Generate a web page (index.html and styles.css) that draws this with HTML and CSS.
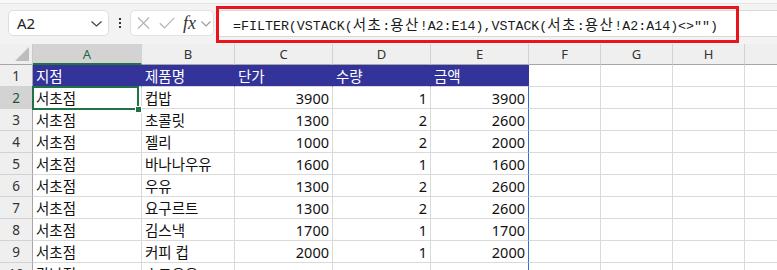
FILE: index.html
```html
<!DOCTYPE html>
<html lang="ko">
<head>
  <meta charset="utf-8">
  <title>FILTER VSTACK</title>
  <link rel="stylesheet" href="styles.css">
</head>
<body>
  <div class="ribbon-edge"></div>
  <div class="formula-bar">
    <div class="name-box">
      <span>A2</span>
      <svg width="11" height="6" viewBox="0 0 11 6"><path d="M0.5 0.5 L5.5 5 L10.5 0.5" fill="none" stroke="#444" stroke-width="1.2"/></svg>
    </div>
    <div class="grip"><i></i><i></i><i></i></div>
    <div class="fx-box">
      <svg width="13" height="12" viewBox="0 0 13 12"><path d="M1 0.5 L12 11.5 M12 0.5 L1 11.5" stroke="#b4b4b4" stroke-width="1.2" fill="none"/></svg>
      <svg width="16" height="12" viewBox="0 0 16 12"><path d="M0.8 6.2 L5.5 10.8 L15.2 0.8" stroke="#b4b4b4" stroke-width="1.2" fill="none"/></svg>
      <span class="fx">fx</span>
      <svg width="10" height="6" viewBox="0 0 10 6"><path d="M0.5 0.5 L5 5 L9.5 0.5" fill="none" stroke="#9a9a9a" stroke-width="1.1"/></svg>
    </div>
    <div class="formula-input">
      <span class="formula">=FILTER(VSTACK(<span class="ko">서초</span>:<span class="ko">용산</span>!A2:E14),VSTACK(<span class="ko">서초</span>:<span class="ko">용산</span>!A2:A14)&lt;&gt;"")</span>
    </div>
    <div class="highlight"></div>
  </div>

  <div class="sheet">
    <!-- column headers -->
    <div class="corner"><div class="corner-tri"></div></div>
    <div class="col-head active">A</div>
    <div class="col-head">B</div>
    <div class="col-head">C</div>
    <div class="col-head">D</div>
    <div class="col-head">E</div>
    <div class="col-head">F</div>
    <div class="col-head">G</div>
    <div class="col-head">H</div>
    <div class="col-head"></div>

    <!-- row 1 -->
    <div class="row-head">1</div>
    <div class="cell th">지점</div>
    <div class="cell th">제품명</div>
    <div class="cell th">단가</div>
    <div class="cell th">수량</div>
    <div class="cell th last">금액</div>
    <div class="cell"></div><div class="cell"></div><div class="cell"></div><div class="cell"></div>

    <!-- row 2 -->
    <div class="row-head active">2</div>
    <div class="cell selected">서초점<div class="selection"><div class="handle"></div></div></div>
    <div class="cell">컵밥</div>
    <div class="cell num">3900</div>
    <div class="cell num">1</div>
    <div class="cell num edge">3900</div>
    <div class="cell"></div><div class="cell"></div><div class="cell"></div><div class="cell"></div>

    <div class="row-head">3</div>
    <div class="cell">서초점</div>
    <div class="cell">초콜릿</div>
    <div class="cell num">1300</div>
    <div class="cell num">2</div>
    <div class="cell num edge">2600</div>
    <div class="cell"></div><div class="cell"></div><div class="cell"></div><div class="cell"></div>

    <div class="row-head">4</div>
    <div class="cell">서초점</div>
    <div class="cell">젤리</div>
    <div class="cell num">1000</div>
    <div class="cell num">2</div>
    <div class="cell num edge">2000</div>
    <div class="cell"></div><div class="cell"></div><div class="cell"></div><div class="cell"></div>

    <div class="row-head">5</div>
    <div class="cell">서초점</div>
    <div class="cell">바나나우유</div>
    <div class="cell num">1600</div>
    <div class="cell num">1</div>
    <div class="cell num edge">1600</div>
    <div class="cell"></div><div class="cell"></div><div class="cell"></div><div class="cell"></div>

    <div class="row-head">6</div>
    <div class="cell">서초점</div>
    <div class="cell">우유</div>
    <div class="cell num">1300</div>
    <div class="cell num">2</div>
    <div class="cell num edge">2600</div>
    <div class="cell"></div><div class="cell"></div><div class="cell"></div><div class="cell"></div>

    <div class="row-head">7</div>
    <div class="cell">서초점</div>
    <div class="cell">요구르트</div>
    <div class="cell num">1300</div>
    <div class="cell num">2</div>
    <div class="cell num edge">2600</div>
    <div class="cell"></div><div class="cell"></div><div class="cell"></div><div class="cell"></div>

    <div class="row-head">8</div>
    <div class="cell">서초점</div>
    <div class="cell">김스낵</div>
    <div class="cell num">1700</div>
    <div class="cell num">1</div>
    <div class="cell num edge">1700</div>
    <div class="cell"></div><div class="cell"></div><div class="cell"></div><div class="cell"></div>

    <div class="row-head">9</div>
    <div class="cell">서초점</div>
    <div class="cell">커피 컵</div>
    <div class="cell num">2000</div>
    <div class="cell num">1</div>
    <div class="cell num edge">2000</div>
    <div class="cell"></div><div class="cell"></div><div class="cell"></div><div class="cell"></div>

    <div class="row-head">10</div>
    <div class="cell">강남점</div>
    <div class="cell">초코우유</div>
    <div class="cell num">1500</div>
    <div class="cell num">1</div>
    <div class="cell num edge">1500</div>
    <div class="cell"></div><div class="cell"></div><div class="cell"></div><div class="cell"></div>
  </div>
</body>
</html>
```

FILE: styles.css
```css
body {
  margin: 0;
  width: 777px;
  height: 270px;
  overflow: hidden;
  background-color: #f3f3f3;
  font-family: "Noto Sans", "Noto Sans CJK KR", sans-serif;
  color: #111;
}

.ribbon-edge {
  height: 3px;
  background-color: #f9f9f9;
  border-bottom: 1px solid #e4e4e4;
}

.formula-bar {
  position: relative;
  height: 40px;
  box-sizing: border-box;
  display: flex;
  align-items: flex-start;
  padding: 6px 0 0 8px;
}

.name-box {
  width: 101px;
  height: 26px;
  box-sizing: border-box;
  display: flex;
  align-items: center;
  justify-content: space-between;
  padding: 0 6px 0 8px;
  background-color: #fff;
  border: 1px solid #dedede;
  border-radius: 5px;
  font-size: 15px;
  color: #222;
}

.name-box svg {
  margin-top: 1px;
}

.grip {
  width: 21px;
  height: 26px;
  display: flex;
  flex-direction: column;
  align-items: center;
  justify-content: center;
  gap: 2px;
}

.grip i {
  width: 2px;
  height: 2px;
  background-color: #333;
}

.fx-box {
  width: 84px;
  height: 26px;
  box-sizing: border-box;
  display: flex;
  align-items: center;
  padding-left: 6px;
  background-color: #fff;
  border: 1px solid #e2e2e2;
  border-radius: 5px;
}

.fx-box svg:nth-child(2) {
  margin-left: 9px;
}

.fx-box .fx {
  margin-left: 8px;
  font-family: "Liberation Serif", serif;
  font-style: italic;
  font-size: 18px;
  line-height: 1;
  color: #333;
}

.fx-box svg:last-child {
  margin-left: 5px;
  margin-top: 2px;
}

.formula-input {
  flex: 1;
  height: 27px;
  margin-left: 2px;
  margin-right: -12px;
  box-sizing: border-box;
  display: flex;
  align-items: center;
  padding-left: 16px;
  background-color: #fff;
  border: 1px solid #d8d8d8;
  border-radius: 5px;
}

.formula {
  font-family: "Liberation Mono", "Noto Sans CJK KR", monospace;
  font-size: 13.3px;
  color: #1a1a1a;
  white-space: nowrap;
}

.formula .ko {
  font-family: "Noto Sans CJK KR", sans-serif;
  font-size: 14.5px;
  letter-spacing: 1.4px;
}

.highlight {
  position: absolute;
  left: 216px;
  top: 2px;
  width: 523px;
  height: 37px;
  box-sizing: border-box;
  border: 3px solid #e8151d;
}

.sheet {
  display: grid;
  grid-template-columns: 33px 109px 93px 98px 98px 98px 72px 72px 72px 40px;
  grid-template-rows: 21px repeat(10, 22px);
  background-color: #fff;
}

.corner {
  display: flex;
  align-items: flex-end;
  justify-content: flex-end;
  padding: 0 3px 3px 0;
  background-color: #efefef;
  border-right: 1px solid #c9c9c9;
  border-bottom: 1px solid #a6a6a6;
}

.corner-tri {
  width: 14px;
  height: 14px;
  background-color: #bdbdbd;
  clip-path: polygon(100% 0, 100% 100%, 0 100%);
}

.col-head {
  display: flex;
  align-items: center;
  justify-content: center;
  background-color: #efefef;
  border-right: 1px solid #d2d2d2;
  border-bottom: 1px solid #a6a6a6;
  font-size: 13px;
  color: #333;
}

.col-head.active {
  background-color: #d3d3d3;
  border-bottom: 2px solid #217346;
  color: #1b6b3f;
}

.row-head {
  display: flex;
  align-items: center;
  justify-content: center;
  padding-top: 1px;
  box-sizing: border-box;
  background-color: #efefef;
  border-right: 1px solid #a6a6a6;
  border-bottom: 1px solid #d2d2d2;
  font-size: 13.5px;
  color: #333;
}

.row-head.active {
  background-color: #d3d3d3;
  color: #1b5a36;
}

.cell {
  position: relative;
  box-sizing: border-box;
  padding: 2px 3px 0 3px;
  line-height: 19px;
  border-right: 1px solid #dadada;
  border-bottom: 1px solid #dadada;
  font-size: 14.5px;
  white-space: nowrap;
  overflow: hidden;
}

.cell.num {
  text-align: right;
}

.cell.th {
  background-color: #333399;
  border-right-color: #333399;
  color: #fff;
}

.cell.edge {
  border-right-color: #2f6fdc;
}

.cell.selected {
  overflow: visible;
  z-index: 1;
}

.selection {
  position: absolute;
  left: -1px;
  top: -1px;
  width: 107px;
  height: 24px;
  box-sizing: border-box;
  border: 2px solid #217346;
}

.handle {
  position: absolute;
  right: -5px;
  bottom: -5px;
  width: 7px;
  height: 7px;
  box-sizing: border-box;
  background-color: #217346;
  border: 1px solid #fff;
}
```
